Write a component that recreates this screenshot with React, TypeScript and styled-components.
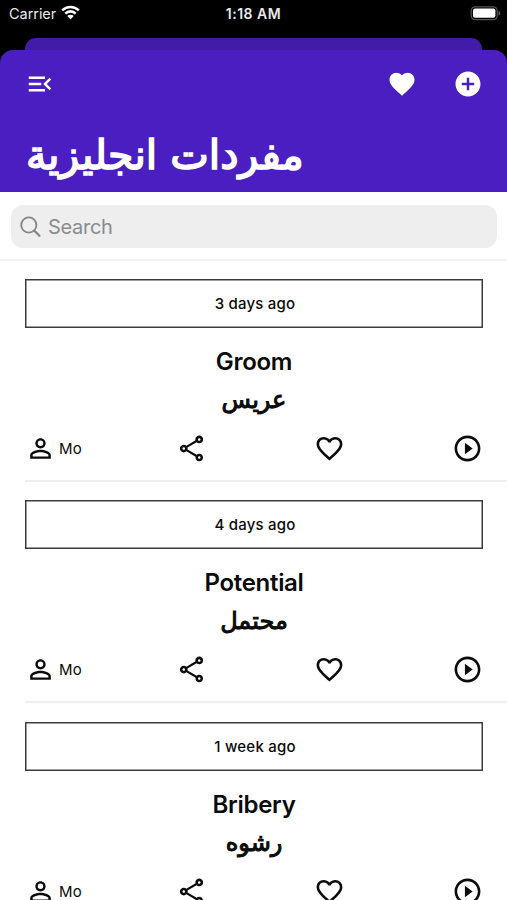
import React from "react";
import styled, { createGlobalStyle } from "styled-components";
import {
  MdMenuOpen,
  MdFavorite,
  MdAddCircle,
  MdPersonOutline,
  MdOutlineShare,
  MdFavoriteBorder,
  MdPlayCircleOutline,
} from "react-icons/md";

const GlobalStyle = createGlobalStyle`
  * { box-sizing: border-box; }
  body { margin: 0; background: #fff; overflow: hidden; }
`;

const Screen = styled.main`
  width: 507px;
  height: 900px;
  overflow: hidden;
  display: flex;
  flex-direction: column;
  background: #fff;
  color: #0b0b0b;
  font-family: Inter, "DejaVu Sans", sans-serif;
`;

const Top = styled.div`
  flex: none;
  background: #000;
`;

const StatusBar = styled.div`
  height: 38px;
  display: grid;
  grid-template-columns: 1fr auto 1fr;
  padding: 0 6px 0 9px;
  color: #e9e9e9;
  font-size: 14.5px;
  line-height: 28px;
`;

const Carrier = styled.div`
  display: flex;
  gap: 6px;
  letter-spacing: -0.05px;
  svg { margin: 5px 0 0 -1px; }
`;

const Clock = styled.div`
  font-weight: 600;
  font-size: 14px;
  letter-spacing: 0.5px;
  margin-right: 3px;
`;

const Battery = styled.div`
  display: flex;
  justify-content: flex-end;
  svg { margin-top: 6px; }
`;

const BackSheet = styled.div`
  height: 12px;
  margin: 0 25px;
  border-radius: 11px 11px 0 0;
  background: #421ba9;
`;

const Header = styled.header`
  height: 142px;
  border-radius: 13px 13px 0 0;
  background: #4a1ec0;
  color: #fff;
  padding: 18px 24px 0 25px;
`;

const Toolbar = styled.div`
  display: flex;
  align-items: center;
  height: 31px;
  gap: 36px;
`;

const Spacer = styled.div`
  flex: 1;
`;

const Title = styled.h1`
  margin: 28px 0 0 1px;
  height: 56px;
  font: 400 41px/56px "DejaVu Sans", sans-serif;
  -webkit-text-stroke: 1.6px currentColor;
  white-space: nowrap;
  width: max-content;
`;

const SearchArea = styled.div`
  flex: none;
  height: 69px;
  padding: 13px 10px 0 11px;
  border-bottom: 2px solid #f3f3f3;
`;

const SearchBox = styled.div`
  height: 43px;
  border-radius: 12px;
  background: #eeeeee;
  color: #8b8b8e;
  display: flex;
  align-items: center;
  gap: 7px;
  padding-left: 9px;
  font-size: 20px;
  letter-spacing: -0.3px;
`;

const Entry = styled.article`
  flex: none;
  height: 221.5px;
  padding: 17.5px 24px 0 25px;
`;

const Age = styled.div`
  height: 49px;
  border: 1.5px solid #3c3c3c;
  box-shadow: inset 0 0 0 0.5px #3c3c3c;
  text-align: center;
  font-size: 15px;
  line-height: 48px;
  font-weight: 500;
  letter-spacing: 0.2px;
  padding-left: 2px;
`;

const Word = styled.h2`
  margin: 16px 0 0;
  height: 36px;
  font-size: 24px;
  line-height: 36px;
  font-weight: 600;
  letter-spacing: -0.3px;
  text-align: center;
`;

const Meaning = styled.div`
  height: 41px;
  font: 400 24px/41px "DejaVu Sans", sans-serif;
  -webkit-text-stroke: 1px currentColor;
  text-align: center;
`;

const Actions = styled.div`
  height: 61px;
  margin-right: -24px;
  padding-right: 24px;
  border-bottom: 2px solid #efefef;
  display: flex;
  justify-content: space-between;
  padding-top: 12px;
  svg { flex: none; }
`;

const Author = styled.div`
  width: 44.5px;
  display: flex;
  align-items: center;
  height: 31px;
  gap: 3px;
  font-size: 15px;
  letter-spacing: 0.1px;
  white-space: nowrap;
`;

const WifiIcon = () => (
  <svg width="19" height="15" viewBox="0 0 19 15" fill="none" stroke="#fff" strokeWidth="2.6">
    <path d="M1.2 5.4a11.7 11.7 0 0 1 16.6 0" />
    <path d="M4.3 8.6a7.3 7.3 0 0 1 10.4 0" />
    <path d="M9.5 14.4 6.3 11.1a4.6 4.6 0 0 1 6.4 0Z" fill="#fff" stroke="none" />
  </svg>
);

const BatteryIcon = () => (
  <svg width="31" height="15" viewBox="0 0 31 15">
    <rect x="1.2" y="0.8" width="26" height="12.8" rx="3.8" fill="none" stroke="#555" strokeWidth="1.2" />
    <rect x="3" y="2.6" width="22.4" height="9.2" rx="2" fill="#fff" />
    <path d="M28.6 5v4.6c2.2-.7 2.2-3.9 0-4.6Z" fill="#666" />
  </svg>
);

const SearchIcon = () => (
  <svg width="21" height="22" viewBox="0 0 21 22" fill="none" stroke="#858587" strokeLinecap="round">
    <circle cx="8.8" cy="9" r="7.6" strokeWidth="1.8" />
    <path d="m14.4 14.8 5 4.9" strokeWidth="2.3" />
  </svg>
);

const entries = [
  { age: "3 days ago", word: "Groom", meaning: "عريس" },
  { age: "4 days ago", word: "Potential", meaning: "محتمل" },
  { age: "1 week ago", word: "Bribery", meaning: "رشوه" },
];

export default function App() {
  return (
    <Screen>
      <GlobalStyle />
      <Top>
        <StatusBar>
          <Carrier>Carrier <WifiIcon /></Carrier>
          <Clock>1:18 AM</Clock>
          <Battery><BatteryIcon /></Battery>
        </StatusBar>
        <BackSheet />
        <Header>
          <Toolbar>
            <MdMenuOpen size={30} />
            <Spacer />
            <MdFavorite size={30} />
            <MdAddCircle size={30} />
          </Toolbar>
          <Title lang="ar">مفردات انجليزية</Title>
        </Header>
      </Top>
      <SearchArea>
        <SearchBox><SearchIcon />Search</SearchBox>
      </SearchArea>
      {entries.map((entry) => (
        <Entry key={entry.word}>
          <Age>{entry.age}</Age>
          <Word>{entry.word}</Word>
          <Meaning lang="ar">{entry.meaning}</Meaning>
          <Actions>
            <Author><MdPersonOutline size={31} />Mo</Author>
            <MdOutlineShare size={31} />
            <MdFavoriteBorder size={31} />
            <MdPlayCircleOutline size={31} />
          </Actions>
        </Entry>
      ))}
    </Screen>
  );
}
